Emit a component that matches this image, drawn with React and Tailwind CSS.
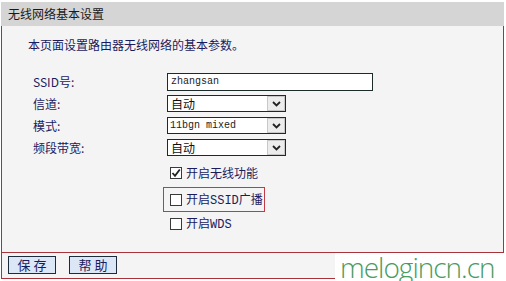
const fields = [
  { label: 'SSID号:', type: 'input', value: 'zhangsan' },
  { label: '信道:', type: 'select', value: '自动' },
  { label: '模式:', type: 'select', value: '11bgn mixed', mono: true },
  { label: '频段带宽:', type: 'select', value: '自动' },
];

const cjk = { fontFamily: '"Noto Sans CJK SC", "DejaVu Sans", sans-serif' };
const mono = { fontFamily: '"Liberation Mono", monospace' };

function Checkbox({ checked }) {
  return (
    <span className="flex h-[12px] w-[12px] shrink-0 items-center justify-center border border-[#3a3a3a] bg-white">
      {checked && (
        <svg width="10" height="10" viewBox="0 0 10 10">
          <path d="M1.5 5 L4 7.8 L8.8 1.5" fill="none" stroke="#222" strokeWidth="1.8" />
        </svg>
      )}
    </span>
  );
}

function Select({ value, isMono }) {
  return (
    <div className="flex h-[17px] w-[119px] border border-[#1c2a2a] bg-white">
      <span
        className={
          isMono
            ? 'flex-1 pl-[2px] text-[10px] leading-[15px] text-[#222]'
            : 'flex-1 pl-[3px] text-[12px] leading-[15px] text-[#111]'
        }
        style={isMono ? mono : cjk}
      >
        {value}
      </span>
      <span className="flex w-[18px] items-center justify-center border border-[#c8c8c8] bg-[#ececec]">
        <svg width="9" height="6" viewBox="0 0 9 6">
          <path d="M1 1 L4.5 4.5 L8 1" fill="none" stroke="#222" strokeWidth="1.8" />
        </svg>
      </span>
    </div>
  );
}

export default function App() {
  return (
    <div className="relative h-[281px] w-[506px] overflow-hidden bg-white pl-[1px] pt-[2px]" style={cjk}>
      <div className="w-[503px]">
        {/* Title bar */}
        <div className="flex h-[24px] items-center bg-[#d5d5d5] pl-[7px] text-[12px] text-[#1a1a1a]">
          无线网络基本设置
        </div>

        {/* Body */}
        <div className="h-[227px] border-x border-b border-[#a8323a] bg-[#f4f4f4]">
          <p className="pl-[26px] pt-[11px] text-[12px] leading-[16px] text-[#1b1b5e]">
            本页面设置路由器无线网络的基本参数。
          </p>

          <div className="mt-[20px] flex flex-col">
            {fields.map((f) => (
              <div key={f.label} className="flex h-[22px] items-start">
                <span className="w-[165px] pl-[31px] text-[12px] leading-[18px] text-[#1b1b5e]">{f.label}</span>
                {f.type === 'input' ? (
                  <div
                    className="h-[18px] w-[206px] border border-[#1c2a2a] bg-white pl-[3px] text-[10px] leading-[16px] text-[#222]"
                    style={mono}
                  >
                    {f.value}
                  </div>
                ) : (
                  <Select value={f.value} isMono={f.mono} />
                )}
              </div>
            ))}
          </div>

          <div className="ml-[161px] mt-[1px] flex flex-col items-start whitespace-nowrap text-[12px] text-[#1b1b5e]">
            <div className="flex h-[22px] items-center gap-[4px] pl-[7px]">
              <Checkbox checked />
              <span>开启无线功能</span>
            </div>
            <div className="mt-[3px] flex h-[25px] items-center gap-[4px] border border-[#c23a46] pl-[6px] pr-[1px]">
              <Checkbox />
              <span>
                开启<span style={mono}>SSID</span>广播
              </span>
            </div>
            <div className="mt-[3px] flex h-[18px] items-center gap-[4px] pl-[7px]">
              <Checkbox />
              <span>
                开启<span style={mono}>WDS</span>
              </span>
            </div>
          </div>
        </div>

        {/* Button row */}
        <div className="flex h-[26px] gap-[13px] border-x border-b border-[#a8323a] bg-[#f4f4f4] pl-[6px] pt-[3px]">
          <button className="h-[18px] w-[48px] border border-[#1c2a3a] bg-[#dbe7f7] text-[13px] leading-[14px] text-[#1b1b5e]">
            保 存
          </button>
          <button className="h-[18px] w-[48px] border border-[#1c2a3a] bg-[#dbe7f7] text-[13px] leading-[14px] text-[#1b1b5e]">
            帮 助
          </button>
        </div>
      </div>

      {/* Watermark */}
      <div className="absolute right-0 top-[253px] flex h-[28px] w-[171px] items-center bg-white pl-[5px]">
        <span
          className="whitespace-nowrap text-[28px] font-light leading-[28px] tracking-[-1px] text-[#4a9b62]"
          style={{ fontFamily: '"Open Sans", sans-serif' }}
        >
          melogincn.cn
        </span>
      </div>
    </div>
  );
}
